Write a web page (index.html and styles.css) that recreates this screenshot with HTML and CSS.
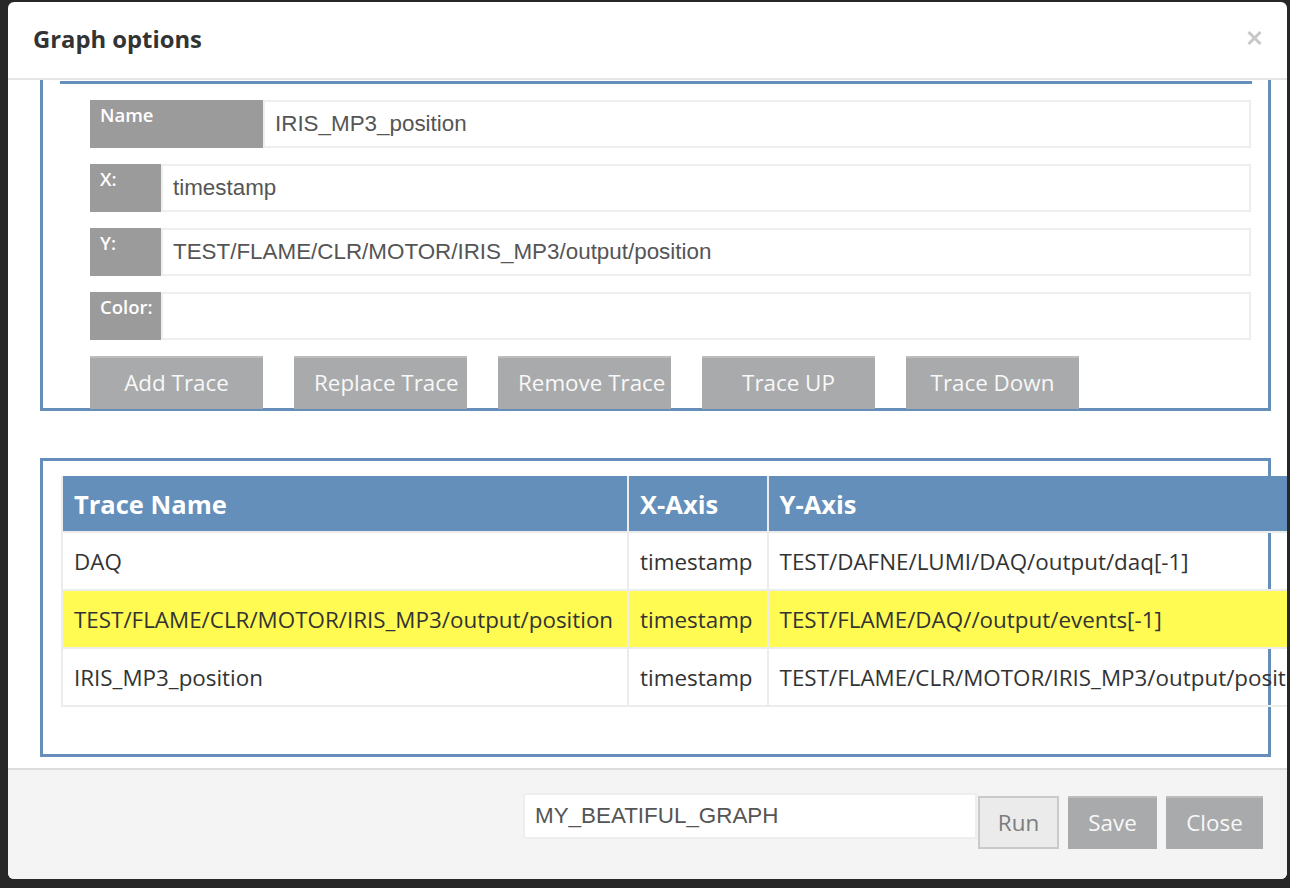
FILE: index.html
```html
<!DOCTYPE html>
<html lang="en">
<head>
<meta charset="utf-8">
<title>Graph options</title>
<link rel="stylesheet" href="styles.css">
</head>
<body>
<div class="modal">
  <div class="modal-header">
    <h4 class="modal-title">Graph options</h4>
    <button class="close" aria-label="Close">
      <svg width="15" height="14" viewBox="0 0 15 14"><path d="M1.5 1 L13.5 13 M13.5 1 L1.5 13" stroke="#c8c8c8" stroke-width="3" fill="none"/></svg>
    </button>
  </div>
  <div class="modal-body">
    <div class="fs fs-top">
      <div class="trace-form">
        <div class="frow"><span class="lbl lbl-wide">Name</span><div class="field">IRIS_MP3_position</div></div>
        <div class="frow"><span class="lbl">X:</span><div class="field">timestamp</div></div>
        <div class="frow"><span class="lbl">Y:</span><div class="field">TEST/FLAME/CLR/MOTOR/IRIS_MP3/output/position</div></div>
        <div class="frow"><span class="lbl">Color:</span><div class="field"></div></div>
        <div class="btns">
          <button class="btn">Add Trace</button>
          <button class="btn">Replace Trace</button>
          <button class="btn">Remove Trace</button>
          <button class="btn">Trace UP</button>
          <button class="btn">Trace Down</button>
        </div>
      </div>
    </div>
    <div class="fs fs-table">
      <table class="traces">
        <thead>
          <tr><th>Trace Name</th><th>X-Axis</th><th>Y-Axis</th></tr>
        </thead>
        <tbody>
          <tr><td>DAQ</td><td>timestamp</td><td>TEST/DAFNE/LUMI/DAQ/output/daq[-1]</td></tr>
          <tr class="sel"><td>TEST/FLAME/CLR/MOTOR/IRIS_MP3/output/position</td><td>timestamp</td><td>TEST/FLAME/DAQ//output/events[-1]</td></tr>
          <tr><td>IRIS_MP3_position</td><td>timestamp</td><td>TEST/FLAME/CLR/MOTOR/IRIS_MP3/output/position</td></tr>
        </tbody>
      </table>
    </div>
  </div>
  <div class="modal-footer">
    <div class="graph-name">MY_BEATIFUL_GRAPH</div>
    <button class="fbtn run">Run</button>
    <button class="fbtn dark save">Save</button>
    <button class="fbtn dark shut">Close</button>
  </div>
</div>
</body>
</html>
```
FILE: styles.css
```css
html, body {
  margin: 0;
  padding: 0;
}
body {
  width: 1290px;
  height: 888px;
  overflow: hidden;
  background: #272727;
  font-family: "Open Sans", "DejaVu Sans", sans-serif;
}
.modal {
  margin: 2px 0 0 8px;
  width: 1279px;
  height: 877px;
  background: #fff;
  border-radius: 6px;
  overflow: hidden;
  display: flex;
  flex-direction: column;
}
.modal-header {
  flex: none;
  height: 76px;
  border-bottom: 2px solid #e6e6e6;
  display: flex;
  align-items: center;
  justify-content: space-between;
  padding: 0 25px;
}
.modal-title {
  margin: 0 0 3px 0;
  font-size: 23.8px;
  font-weight: 700;
  color: #333;
}
.close {
  border: 0;
  background: none;
  padding: 0;
  margin: 0 0 5px 0;
  display: flex;
  width: 15px;
  height: 14px;
}
.modal-body {
  flex: 1;
  min-height: 0;
  padding: 0 16px 0 32px;
  overflow: hidden;
}
.fs {
  border: 3px solid #658fba;
}
.fs-top {
  border-top: 0;
  padding: 1px 16px 0 17px;
}
.trace-form {
  border-top: 3px solid #658fba;
  padding: 16px 1px 0 30px;
}
.frow {
  display: flex;
  height: 48px;
  margin-bottom: 16px;
}
.lbl {
  flex: none;
  width: 71px;
  box-sizing: border-box;
  background: #9b9b9b;
  color: #fff;
  font-size: 18.5px;
  font-weight: 600;
  padding: 2px 0 0 10px;
  line-height: 26px;
}
.lbl-wide {
  width: 173px;
}
.field {
  flex: 1;
  border: 2px solid #eeeeee;
  background: #fff;
  padding: 0 10px;
  display: flex;
  align-items: center;
  font-family: "Liberation Sans", Arial, sans-serif;
  font-size: 22.4px;
  color: #555;
}
.btns {
  display: flex;
  gap: 31px;
  margin-bottom: -1px;
}
.btn {
  display: block;
  flex: none;
  box-sizing: border-box;
  width: 173px;
  height: 53px;
  border: 0;
  padding: 0 20px;
  text-align: center;
  white-space: nowrap;
  line-height: 53px;
  overflow: visible;
  background: #a9aaab;
  box-shadow: inset 0 2px 0 #bdbdbd;
  color: #f8f8f8;
  font-family: "Open Sans", sans-serif;
  font-size: 22.4px;
}
.fs-table {
  margin-top: 47px;
  padding: 15px 0 47px 18px;
}
.traces {
  border-collapse: collapse;
  white-space: nowrap;
  font-size: 22.4px;
  color: #333;
}
.traces th,
.traces td {
  border: 2px solid #ececec;
  padding: 0 14px 0 11px;
  text-align: left;
}
.traces th {
  border-top: 0;
  background: #648fba;
  color: #fff;
  font-size: 25.5px;
  font-weight: 700;
  height: 55px;
}
.traces td {
  height: 56px;
}
.traces tr.sel td {
  background: #fffb52;
}
.modal-footer {
  flex: none;
  height: 111px;
  box-sizing: border-box;
  border-top: 2px solid #dddddd;
  background: #f4f4f4;
  display: flex;
  justify-content: flex-end;
  align-items: flex-start;
  padding: 23px 24px 0 0;
}
.graph-name {
  width: 454px;
  height: 46px;
  box-sizing: border-box;
  border: 2px solid #eeeeee;
  background: #fff;
  padding: 0 10px;
  display: flex;
  align-items: center;
  font-family: "Liberation Sans", Arial, sans-serif;
  font-size: 22.4px;
  color: #555;
}
.fbtn {
  flex: none;
  margin-top: 3px;
  height: 53px;
  box-sizing: border-box;
  padding: 0;
  border: 0;
  font-family: "Open Sans", sans-serif;
  font-size: 22.4px;
}
.fbtn.run {
  margin-left: 1px;
  width: 81px;
  border: 2px solid #cacaca;
  background: #ebebeb;
  color: #7c7c7c;
}
.fbtn.dark {
  margin-left: 9px;
  background: #a9aaab;
  box-shadow: inset 0 2px 0 #bdbdbd;
  color: #f8f8f8;
}
.fbtn.save {
  width: 89px;
}
.fbtn.shut {
  width: 97px;
}
```
